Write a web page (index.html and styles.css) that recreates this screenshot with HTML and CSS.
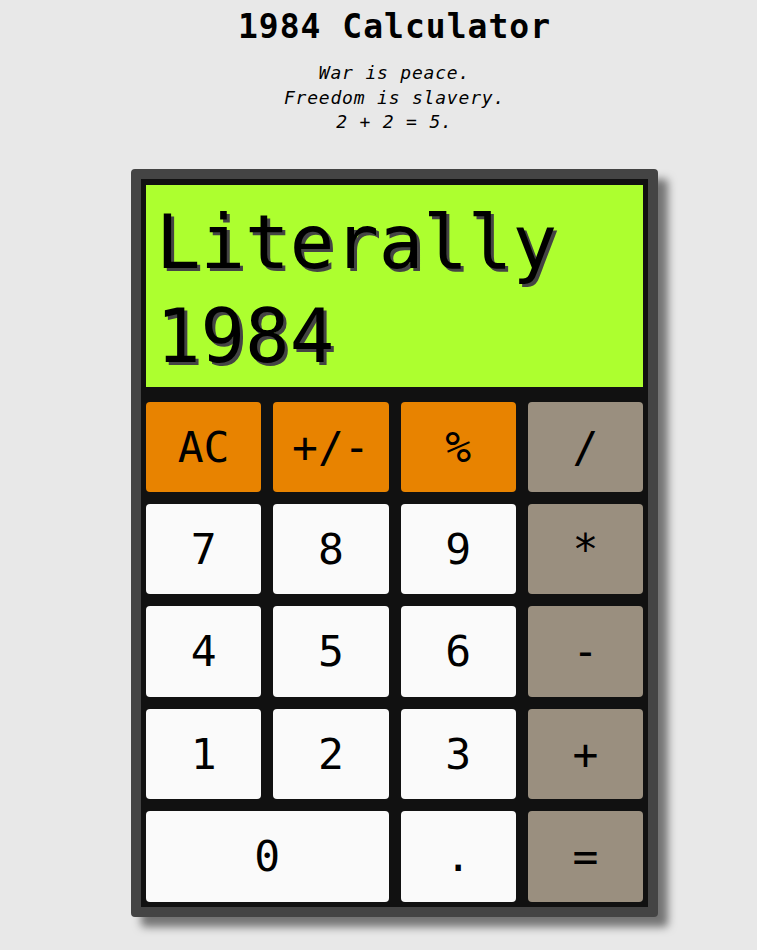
FILE: index.html
```html
<!DOCTYPE html>
<html lang="en">
<head>
<meta charset="utf-8">
<title>1984 Calculator</title>
<link rel="stylesheet" href="styles.css">
</head>
<body>
<main class="page">
  <h1 class="title">1984 Calculator</h1>
  <p class="motto">War is peace.<br>Freedom is slavery.<br>2 + 2 = 5.</p>
  <div class="calc">
    <div class="display">Literally 1984</div>
    <div class="keys">
      <button class="key fn">AC</button>
      <button class="key fn">+/-</button>
      <button class="key fn">%</button>
      <button class="key op">/</button>
      <button class="key num">7</button>
      <button class="key num">8</button>
      <button class="key num">9</button>
      <button class="key op">*</button>
      <button class="key num">4</button>
      <button class="key num">5</button>
      <button class="key num">6</button>
      <button class="key op">-</button>
      <button class="key num">1</button>
      <button class="key num">2</button>
      <button class="key num">3</button>
      <button class="key op">+</button>
      <button class="key num wide">0</button>
      <button class="key num">.</button>
      <button class="key op">=</button>
    </div>
  </div>
</main>
</body>
</html>
```
FILE: styles.css
```css
html, body {
  margin: 0;
  padding: 0;
  background: #e8e8e8;
}
body {
  min-height: 950px;
  box-sizing: border-box;
  padding: 8px 0 30px 32px;
  font-family: "DejaVu Sans Mono", monospace;
  color: #000;
}
.page {
  display: flex;
  flex-direction: column;
  align-items: center;
}
.title {
  margin: 0;
  font-size: 33px;
  font-weight: bold;
  letter-spacing: 1px;
  line-height: 38px;
}
.motto {
  margin: 15px 0 0;
  font-size: 18px;
  font-style: italic;
  letter-spacing: 0.8px;
  line-height: 24.5px;
  text-align: center;
}
.calc {
  margin-top: 34px;
  width: 497px;
  padding: 6px 5px 5px;
  background: #111;
  border: 10px solid #444;
  border-radius: 4px;
  box-shadow: 10px 10px 8px rgba(0, 0, 0, 0.5);
}
.display {
  box-sizing: border-box;
  height: 202px;
  padding: 10px 10px 0;
  background: #adff2f;
  font-size: 74px;
  line-height: 94px;
  text-shadow: 3px 3px 0 #444;
  overflow: hidden;
}
.keys {
  margin-top: 15px;
  height: 500px;
  display: grid;
  grid-template-columns: repeat(4, 1fr);
  grid-template-rows: repeat(5, 1fr);
  gap: 12px;
}
.key {
  display: flex;
  align-items: center;
  justify-content: center;
  border: none;
  border-radius: 4px;
  padding: 0;
  font-family: "DejaVu Sans Mono", monospace;
  font-size: 43px;
  color: #000;
}
.fn { background: #e88300; }
.op { background: #9a8f7f; }
.num { background: #fafafa; }
.wide { grid-column: span 2; }
```
